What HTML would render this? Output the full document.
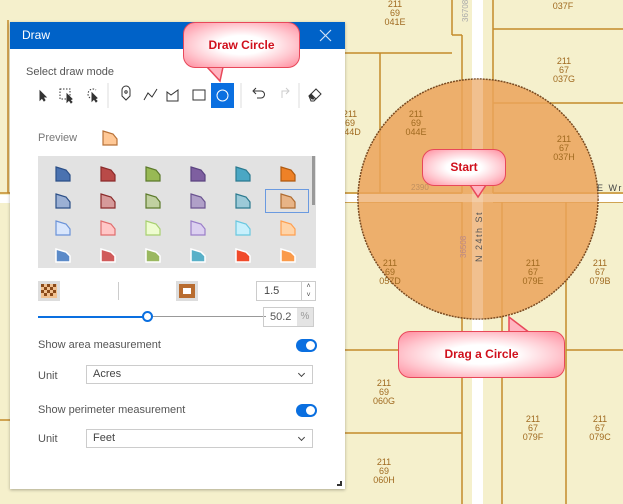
<!DOCTYPE html>
<html><head><meta charset="utf-8"><style>
*{margin:0;padding:0;box-sizing:border-box}
body{width:623px;height:504px;overflow:hidden;position:relative;background:#f5f0cc;font-family:"Liberation Sans",sans-serif}
.abs{position:absolute}
.lbl{position:absolute;font-size:9px;line-height:9px;color:#a06a20;text-align:center;width:40px}
.panel{position:absolute;left:10px;top:22px;width:335px;height:467px;background:#fff;box-shadow:0 1px 3px rgba(0,0,0,.3)}
.hdr{position:absolute;left:0;top:0;width:335px;height:27px;background:#0062c8;color:#fff;font-size:12px;line-height:27px;padding-left:12px}
.t{position:absolute;font-size:11px;color:#555}
.sel{position:absolute;left:76px;width:227px;height:19px;border:1px solid #ccc;font-size:11px;color:#444;line-height:17px;padding-left:6px}
.sel:after{content:"";position:absolute;right:8px;top:5px;width:4px;height:4px;border-right:1.2px solid #444;border-bottom:1.2px solid #444;transform:rotate(45deg)}
.tog{position:absolute;left:286px;width:21px;height:13px;border-radius:7px;background:#0a6fe0}
.tog:after{content:"";position:absolute;right:2px;top:2px;width:9px;height:9px;border-radius:50%;background:#fff}
.bub{position:absolute;border:1.5px solid #e8485a;border-radius:12px;background:radial-gradient(ellipse at center,#fff 30%,#ffc8d0 65%,#ff8a9c 100%);color:#d0101c;font-weight:bold;font-size:12px;text-align:center}
</style></head><body>
<svg class="abs" style="left:0;top:0" width="623" height="504">
<g stroke="#c48a2a" stroke-width="1.5" fill="none">
<line x1="452" y1="0" x2="452" y2="35"/><line x1="452" y1="35" x2="462" y2="35"/><line x1="462" y1="35" x2="462" y2="193"/>
<line x1="462" y1="202" x2="462" y2="504"/>
<line x1="493" y1="0" x2="493" y2="193"/><line x1="493" y1="29" x2="623" y2="29"/><line x1="493" y1="103" x2="623" y2="103"/>
<line x1="345" y1="53" x2="452" y2="53"/><line x1="380" y1="53" x2="380" y2="193"/>
<line x1="345" y1="193" x2="462" y2="193"/><line x1="493" y1="193" x2="623" y2="193"/>
<line x1="345" y1="202" x2="462" y2="202"/><line x1="493" y1="202" x2="623" y2="202"/>
<line x1="502" y1="202" x2="502" y2="504"/><line x1="566" y1="195" x2="566" y2="504"/>
<line x1="345" y1="350" x2="462" y2="350"/><line x1="566" y1="350" x2="623" y2="350"/>
<line x1="345" y1="433" x2="462" y2="433"/>
<line x1="8" y1="20" x2="8" y2="193"/><line x1="0" y1="193" x2="10" y2="193"/><line x1="0" y1="420" x2="10" y2="420"/>
</g>
<rect x="472" y="0" width="11" height="504" fill="#fff"/>
<rect x="345" y="194" width="278" height="8" fill="#fff"/>
<rect x="0" y="195" width="10" height="8" fill="#fff"/>
<circle cx="478" cy="199" r="120" fill="#eba35a" fill-opacity=".85" stroke="#7a4a20" stroke-width="1.5" stroke-dasharray="2 1"/>
<g fill="#fff" fill-opacity=".2"><rect x="472" y="79" width="11" height="240"/><rect x="358" y="194" width="240" height="8"/></g>
<text x="468" y="22" transform="rotate(-90 468 22)" font-size="8" fill="#aaa" font-family="Liberation Sans">36708</text>
<text x="466" y="258" transform="rotate(-90 466 258)" font-size="8" fill="#b88" font-family="Liberation Sans">36508</text>
<text x="482" y="262" transform="rotate(-90 482 262)" font-size="9" fill="#555" letter-spacing="1.5" font-family="Liberation Sans">N 24th St</text>
<text x="411" y="190" font-size="8" fill="#c09060" font-family="Liberation Sans">2390</text>
<text x="597" y="191" font-size="9" fill="#444" letter-spacing="1.5" font-family="Liberation Sans">E Wra</text>
</svg>
<div class="lbl" style="left:375px;top:0">211<br>69<br>041E</div>
<div class="lbl" style="left:543px;top:-7px">211<br>037F</div>
<div class="lbl" style="left:544px;top:57px">211<br>67<br>037G</div>
<div class="lbl" style="left:396px;top:110px">211<br>69<br>044E</div>
<div class="lbl" style="left:544px;top:135px">211<br>67<br>037H</div>
<div class="lbl" style="left:330px;top:110px">211<br>69<br>044D</div>
<div class="lbl" style="left:370px;top:259px">211<br>69<br>057D</div>
<div class="lbl" style="left:513px;top:259px">211<br>67<br>079E</div>
<div class="lbl" style="left:580px;top:259px">211<br>67<br>079B</div>
<div class="lbl" style="left:364px;top:379px">211<br>69<br>060G</div>
<div class="lbl" style="left:513px;top:415px">211<br>67<br>079F</div>
<div class="lbl" style="left:580px;top:415px">211<br>67<br>079C</div>
<div class="lbl" style="left:364px;top:458px">211<br>69<br>060H</div>

<div class="panel">
<div class="hdr">Draw</div>
<svg class="abs" style="left:309px;top:7px" width="13" height="13"><path d="M1 1L12 12M12 1L1 12" stroke="#cfe0f5" stroke-width="1.2"/></svg>
<div class="t" style="left:16px;top:44px">Select draw mode</div>
<svg class="abs" style="left:0;top:58px" width="335" height="30" fill="none" stroke="#333" stroke-width="1">
<path d="M30 11l0 9 2-2 2 3 1-1-2-3 3 0z" fill="#333"/>
<rect x="50" y="9" width="10" height="10" stroke-dasharray="1.5 1.5"/><path d="M57 14l0 8 2-2 2 3 1-1-2-2 2-1z" fill="#333"/>
<path d="M80 18a5 5 0 1 1 6-8" stroke-dasharray="1.5 1.5"/><path d="M82 13l0 8 2-2 2 3 1-1-2-2 2-1z" fill="#333"/>
<line x1="98" y1="3" x2="98" y2="28" stroke="#ddd"/>
<path d="M112 10a4 4 0 0 1 8 0v6l-4 4-4-4z"/><circle cx="116" cy="12" r="1.2"/>
<path d="M134 20l4-7 4 4 5-8"/>
<path d="M157 21v-9l4 3 7-5v11z"/>
<rect x="183" y="10" width="12" height="10"/>
<rect x="201" y="3" width="23" height="25" fill="#0a6fe0" stroke="none"/><circle cx="212.5" cy="15.5" r="5.5" stroke="#fff"/>
<line x1="231" y1="3" x2="231" y2="28" stroke="#ddd"/>
<path d="M244 11h7a3.5 3.5 0 0 1 0 7h-4M246 8l-3 3 3 3"/>
<path d="M279 11h-7v7M276 8l3 3-3 3" stroke="#ccc"/>
<line x1="289" y1="3" x2="289" y2="28" stroke="#ddd"/>
<path d="M299 16l7-7 5 5-7 7h-3z M301 14l5 5" /><path d="M301 14l-2 2 3 3h2z" fill="#333"/>
</svg>
<div class="t" style="left:28px;top:110px;color:#777">Preview</div>
<svg class="abs" style="left:92px;top:108px" width="17" height="17"><polygon points="1,1 11,4 15,9 15,15 1,15" fill="#ffc896" stroke="#b87238" stroke-width="1.2"/></svg>
<div class="abs" style="left:28px;top:134px;width:278px;height:112px;background:#e2e2e2;overflow:hidden">
<div class="abs" style="left:274px;top:0;width:3px;height:49px;background:#999"></div>
<div class="abs" style="left:227px;top:33px;width:44px;height:24px;border:1px solid #6a9ae0"></div>
<svg class="abs" style="left:0;top:0" width="278" height="112">
<g stroke-width="1.2">
<polygon transform="translate(17,10)" points="1,1 11,4 15,9 15,15 1,15" fill="#4a72b0" stroke="#2c4f87"/>
<polygon transform="translate(62,10)" points="1,1 11,4 15,9 15,15 1,15" fill="#b94a48" stroke="#8b2b2b"/>
<polygon transform="translate(107,10)" points="1,1 11,4 15,9 15,15 1,15" fill="#98b954" stroke="#5c7a2c"/>
<polygon transform="translate(152,10)" points="1,1 11,4 15,9 15,15 1,15" fill="#7e5fa0" stroke="#5b4380"/>
<polygon transform="translate(197,10)" points="1,1 11,4 15,9 15,15 1,15" fill="#4aa7c4" stroke="#2c7a8f"/>
<polygon transform="translate(242,10)" points="1,1 11,4 15,9 15,15 1,15" fill="#ee8127" stroke="#b05a10"/>
<polygon transform="translate(17,37)" points="1,1 11,4 15,9 15,15 1,15" fill="#9bb0d4" stroke="#2c4f87"/>
<polygon transform="translate(62,37)" points="1,1 11,4 15,9 15,15 1,15" fill="#d69a9a" stroke="#8b2b2b"/>
<polygon transform="translate(107,37)" points="1,1 11,4 15,9 15,15 1,15" fill="#c0d0a0" stroke="#5c7a2c"/>
<polygon transform="translate(152,37)" points="1,1 11,4 15,9 15,15 1,15" fill="#b0a0c8" stroke="#6b5390"/>
<polygon transform="translate(197,37)" points="1,1 11,4 15,9 15,15 1,15" fill="#9ccad8" stroke="#2c7a8f"/>
<polygon transform="translate(242,37)" points="1,1 11,4 15,9 15,15 1,15" fill="#e8b486" stroke="#b06c30"/>
<polygon transform="translate(17,64)" points="1,1 11,4 15,9 15,15 1,15" fill="#d9e6fc" stroke="#6b93d8"/>
<polygon transform="translate(62,64)" points="1,1 11,4 15,9 15,15 1,15" fill="#ffc7c7" stroke="#e06e6e"/>
<polygon transform="translate(107,64)" points="1,1 11,4 15,9 15,15 1,15" fill="#eefcd0" stroke="#a8d070"/>
<polygon transform="translate(152,64)" points="1,1 11,4 15,9 15,15 1,15" fill="#dcd0f0" stroke="#9b7fc9"/>
<polygon transform="translate(197,64)" points="1,1 11,4 15,9 15,15 1,15" fill="#c8f0fc" stroke="#6ac8e0"/>
<polygon transform="translate(242,64)" points="1,1 11,4 15,9 15,15 1,15" fill="#ffd4a8" stroke="#ffa050"/>
</g>
<g stroke="#fff" stroke-width="1.5">
<polygon transform="translate(17,91)" points="1,2 11,5 15,9 15,15 1,15" fill="#5b8ac8"/>
<polygon transform="translate(62,91)" points="1,2 11,5 15,9 15,15 1,15" fill="#d05a5a"/>
<polygon transform="translate(107,91)" points="1,2 11,5 15,9 15,15 1,15" fill="#9ab860"/>
<polygon transform="translate(152,91)" points="1,2 11,5 15,9 15,15 1,15" fill="#58b0c8"/>
<polygon transform="translate(197,91)" points="1,2 11,5 15,9 15,15 1,15" fill="#f04a2a"/>
<polygon transform="translate(242,91)" points="1,2 11,5 15,9 15,15 1,15" fill="#fa9a4a"/>
</g></svg></div>
<div class="abs" style="left:28px;top:259px;width:22px;height:20px;background:#ddd"></div>
<svg class="abs" style="left:31px;top:262px" width="16" height="14"><rect width="16" height="14" fill="#f0c090"/><g fill="#8a4a1a"><rect x="0" y="0" width="3" height="3"/><rect x="6" y="0" width="3" height="3"/><rect x="12" y="0" width="3" height="3"/><rect x="3" y="3" width="3" height="3"/><rect x="9" y="3" width="3" height="3"/><rect x="0" y="6" width="3" height="3"/><rect x="6" y="6" width="3" height="3"/><rect x="12" y="6" width="3" height="3"/><rect x="3" y="9" width="3" height="3"/><rect x="9" y="9" width="3" height="3"/></g></svg>
<div class="abs" style="left:108px;top:260px;width:1px;height:18px;background:#ccc"></div>
<div class="abs" style="left:166px;top:259px;width:22px;height:20px;background:#ddd"></div>
<div class="abs" style="left:169px;top:262px;width:16px;height:14px;background:#b86c30"></div>
<div class="abs" style="left:173px;top:266px;width:8px;height:6px;background:#fff"></div>
<div class="abs" style="left:246px;top:259px;width:60px;height:20px;border:1px solid #ccc;font-size:11px;color:#444;line-height:18px;padding-left:7px">1.5</div>
<div class="abs" style="left:291px;top:259px;width:15px;height:20px;border:1px solid #ccc;font-size:7px;line-height:9px;text-align:center;color:#444">˄<br>˅</div>
<div class="abs" style="left:28px;top:294px;width:109px;height:2px;background:#0a6fe0"></div>
<div class="abs" style="left:137px;top:294px;width:119px;height:1px;background:#999"></div>
<div class="abs" style="left:132px;top:289px;width:11px;height:11px;border:2px solid #0a6fe0;border-radius:50%;background:#fff"></div>
<div class="abs" style="left:253px;top:285px;width:51px;height:20px;border:1px solid #ccc;font-size:11px;color:#555;line-height:18px;padding-left:6px">50.2</div>
<div class="abs" style="left:287px;top:286px;width:16px;height:18px;background:#e4e4e4;font-size:10px;color:#999;line-height:18px;text-align:center">%</div>
<div class="t" style="left:28px;top:317px">Show area measurement</div>
<div class="tog" style="top:317px"></div>
<div class="t" style="left:28px;top:348px">Unit</div>
<div class="sel" style="top:343px">Acres</div>
<div class="t" style="left:28px;top:382px">Show perimeter measurement</div>
<div class="tog" style="top:382px"></div>
<div class="t" style="left:28px;top:411px">Unit</div>
<div class="sel" style="top:407px">Feet</div>
<div class="abs" style="left:327px;top:459px;width:5px;height:5px;border-right:2px solid #333;border-bottom:2px solid #333"></div>
</div>

<svg class="abs" style="left:0;top:0" width="623" height="504" fill="none">
<path d="M207 67L220 81L223 67" fill="#ffb4c0" stroke="#e8485a" stroke-width="1.5"/>
<path d="M470 185L478 197L486 185" fill="#ffb4c0" stroke="#e8485a" stroke-width="1.5"/>
<path d="M509 333L509 317L530 333" fill="#ffb4c0" stroke="#e8485a" stroke-width="1.5"/>
</svg>
<div class="bub" style="left:183px;top:22px;width:117px;height:46px;line-height:44px">Draw Circle</div>
<div class="bub" style="left:422px;top:149px;width:84px;height:37px;line-height:34px">Start</div>
<div class="bub" style="left:398px;top:331px;width:167px;height:47px;line-height:45px">Drag a Circle</div>
</body></html>
